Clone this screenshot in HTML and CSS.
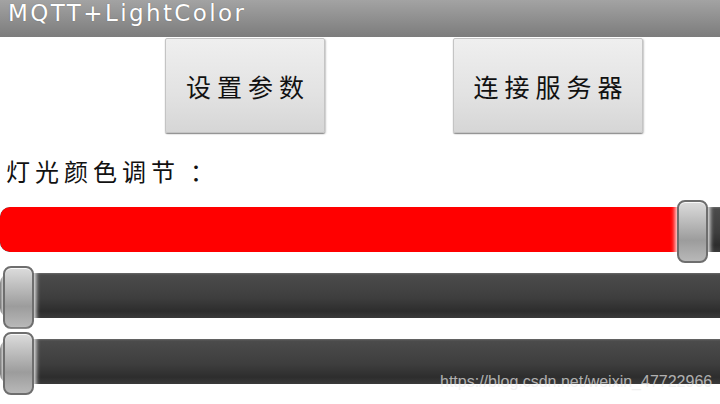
FILE: index.html
```html
<!DOCTYPE html>
<html>
<head>
<meta charset="utf-8">
<link rel="stylesheet" href="styles.css">
</head>
<body>
<div class="app">
  <header class="titlebar">MQTT+LightColor</header>
  <div class="buttons">
    <button class="btn btn-params">设置参数</button>
    <button class="btn btn-connect">连接服务器</button>
  </div>
  <div class="label">灯光颜色调节<span class="colon">：</span></div>
  <div class="slider">
    <div class="track"><div class="fill" style="width:690px"></div></div>
    <div class="thumb" style="left:677px"></div>
  </div>
  <div class="slider">
    <div class="track"></div>
    <div class="thumb" style="left:3px"></div>
  </div>
  <div class="slider">
    <div class="track"></div>
    <div class="thumb" style="left:3px"></div>
  </div>
  <div class="watermark">https://blog.csdn.net/weixin_47722966</div>
</div>
</body>
</html>
```
FILE: styles.css
```css
* { box-sizing: border-box; }
html, body { margin: 0; padding: 0; background: #fff; }
.app {
  position: relative;
  width: 720px;
  height: 404px;
  overflow: hidden;
  font-family: "Noto Sans CJK SC", "Noto Sans", sans-serif;
}
.titlebar {
  height: 37px;
  background: linear-gradient(#a3a3a3, #7c7c7c);
  color: #fff;
  font-family: "DejaVu Sans", sans-serif;
  font-size: 23px;
  line-height: 26px;
  padding-left: 8px;
  letter-spacing: 2.4px;
  text-shadow: 0 0 1px rgba(0,0,0,0.4);
}
.buttons {
  display: flex;
  padding-left: 165px;
  gap: 128px;
  margin-top: 1px;
}
.btn {
  height: 95px;
  border: 1px solid #c4c4c4;
  border-radius: 2px;
  background: linear-gradient(#efefef, #e2e2e2 60%, #d6d6d6);
  box-shadow: 0 1px 1px rgba(0,0,0,0.35), 1px 1px 2px rgba(0,0,0,0.2);
  font-family: "Noto Sans CJK SC", sans-serif;
  font-size: 25px;
  color: #111;
  padding: 0 0 0 6px;
  letter-spacing: 6px;
}
.btn-params { width: 160px; }
.btn-connect { width: 190px; }
.label {
  margin-top: 23px;
  padding-left: 6px;
  font-size: 24px;
  line-height: 30px;
  color: #111;
  letter-spacing: 5px;
  height: 44px;
}
.colon { padding-left: 10px; }
.slider {
  position: relative;
  height: 66px;
}
.track {
  position: absolute;
  left: 0;
  right: 0;
  top: 7px;
  height: 45px;
  border-radius: 10px 0 0 10px;
  background: linear-gradient(#6a6a6a 0, #4b4b4b 2px, #3e3e3e 55%, #2d2d2d 85%, #3a3a3a 100%);
  overflow: hidden;
}
.fill {
  height: 100%;
  background: #ff0000;
  border-radius: 10px 0 0 10px;
}
.thumb {
  position: absolute;
  top: 0;
  width: 31px;
  height: 63px;
  border-radius: 8px;
  border: 2px solid #6e6e6e;
  background: linear-gradient(#dcdcdc, #b5b5b5 40%, #9c9c9c 65%, #b8b8b8 100%);
  box-shadow: 0 0 4px 2px rgba(255,255,255,0.9), inset 0 1px 0 rgba(255,255,255,0.8);
}
.watermark {
  position: absolute;
  left: 440px;
  top: 373px;
  font-family: "Liberation Sans", Arial, sans-serif;
  font-size: 16px;
  color: rgba(235,235,235,0.7);
}
```
